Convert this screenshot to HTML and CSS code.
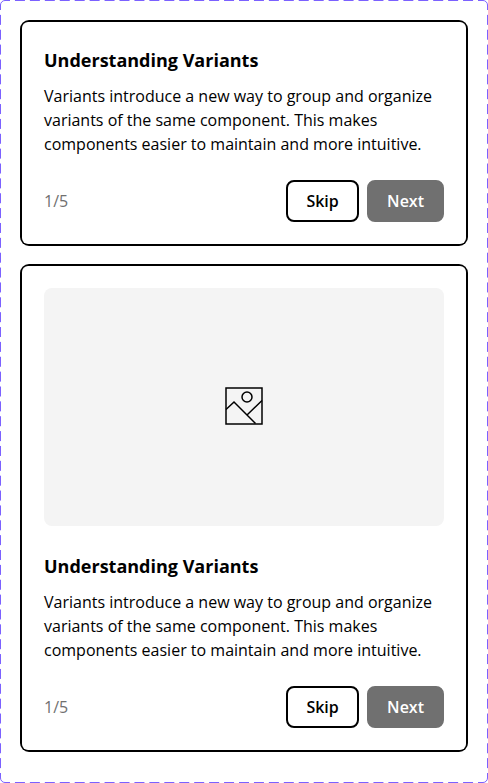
FILE: index.html
```html
<!DOCTYPE html>
<html lang="en">
<head>
<meta charset="utf-8">
<title>Coach marks</title>
<link rel="stylesheet" href="styles.css">
</head>
<body>
<main class="frame">
  <svg class="frame-outline" width="488" height="783" aria-hidden="true">
    <path class="dash-x" d="M5 .5H483M5 782.5H483"/>
    <path class="dash-y" d="M.5 5V778M487.500 5V778"/>
    <path d="M.5 5A4.500 4.500 0 0 1 5 .5M483 .5A4.500 4.500 0 0 1 487.500 5M487.500 778A4.500 4.500 0 0 1 483 782.500M5 782.500A4.500 4.500 0 0 1 .5 778"/>
  </svg>
  <section class="card">
    <div class="card-body">
      <h2 class="title">Understanding Variants</h2>
      <p class="text">Variants introduce a new way to group and organize variants of the same component. This makes components easier to maintain and more intuitive.</p>
      <footer class="footer">
        <span class="step">1/5</span>
        <button class="btn">Skip</button>
        <button class="btn btn-primary">Next</button>
      </footer>
    </div>
  </section>
  <section class="card">
    <div class="card-body">
      <div class="media">
        <svg width="40" height="40" viewBox="0 0 40 40" aria-hidden="true">
          <rect x="2" y="2" width="36" height="36"/>
          <circle cx="23" cy="11" r="5"/>
          <path d="M2 23.500 10 16l21.500 21.500M23 29 38 14.500"/>
        </svg>
      </div>
      <h2 class="title">Understanding Variants</h2>
      <p class="text">Variants introduce a new way to group and organize variants of the same component. This makes components easier to maintain and more intuitive.</p>
      <footer class="footer">
        <span class="step">1/5</span>
        <button class="btn">Skip</button>
        <button class="btn btn-primary">Next</button>
      </footer>
    </div>
  </section>
</main>
</body>
</html>
```
FILE: styles.css
```css
* { box-sizing: border-box; }
body {
  margin: 0;
  background: #fff;
  color: #000;
  font-family: "Open Sans", "Noto Sans", sans-serif;
}
.frame {
  position: relative;
  display: flex;
  flex-direction: column;
  gap: 18px;
  height: 783px;
  padding: 20px;
}
.frame-outline {
  position: absolute;
  inset: 0;
  fill: none;
  stroke: #7b61ff;
}
/* Dash periods divide each side evenly, with a half dash at both corners. */
.dash-x {
  stroke-dasharray: 10 4.9375;
  stroke-dashoffset: 5;
}
.dash-y {
  stroke-dasharray: 10 4.8654;
  stroke-dashoffset: 5;
}
.card {
  padding: 2px;
  border-radius: 9px;
  background: #000;
}
.card-body {
  padding: 22px;
  border-radius: 6px;
  background: #fff;
}
.media {
  display: flex;
  align-items: center;
  justify-content: center;
  height: 238px;
  margin-bottom: 24px;
  padding-bottom: 2px;
  border-radius: 8px;
  background: #f4f4f4;
}
.media svg {
  fill: none;
  stroke: #000;
  stroke-width: 1.5;
}
.title {
  margin: 0 0 12px;
  padding-top: 4px;
  font-size: 18px;
  line-height: 24px;
  font-weight: 700;
}
.text {
  margin: 0 0 24px;
  font-size: 16px;
  line-height: 24px;
}
.footer {
  display: flex;
  align-items: center;
  gap: 8px;
}
.step {
  margin-right: auto;
  color: #707070;
  font-size: 16px;
  line-height: 24px;
}
.btn {
  min-width: 73px;
  height: 42px;
  padding: 0 18px;
  border: 2px solid #000;
  border-radius: 8px;
  background: #fff;
  color: #000;
  font: 600 16px/24px "Open Sans", "Noto Sans", sans-serif;
}
.btn-primary {
  border-color: #707070;
  background: #707070;
  color: #fff;
}
```
